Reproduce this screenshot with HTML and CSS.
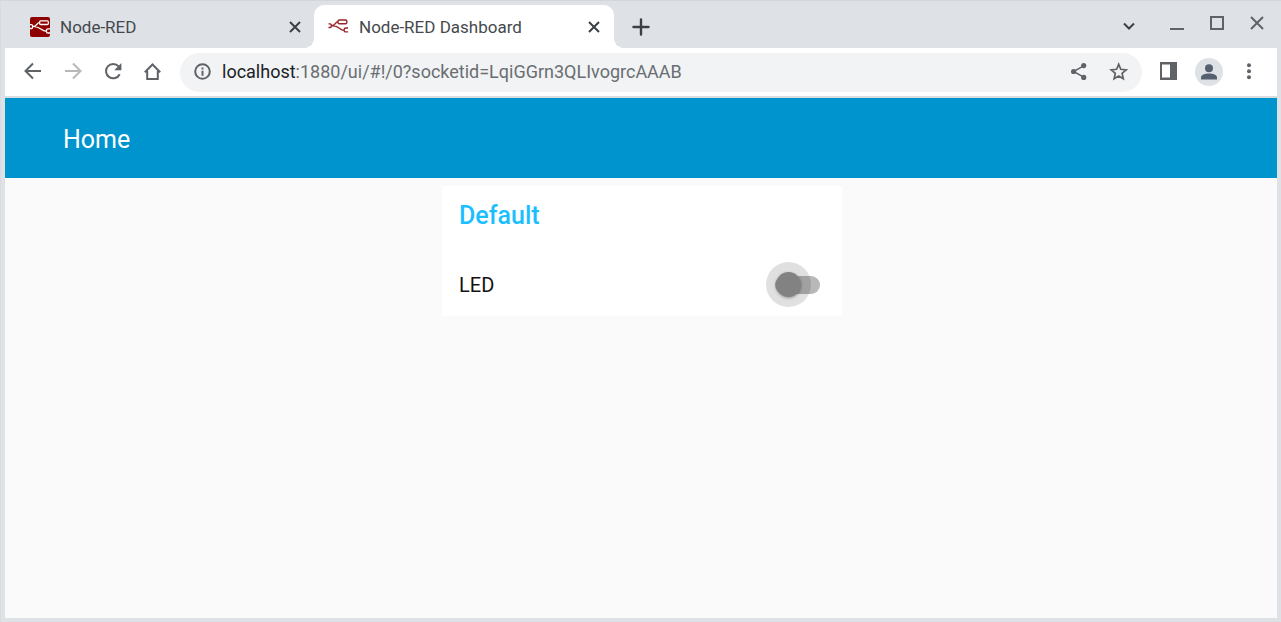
FILE: index.html
```html
<!DOCTYPE html>
<html lang="en">
<head>
<meta charset="utf-8">
<title>Node-RED Dashboard</title>
<link rel="stylesheet" href="styles.css">
</head>
<body>
<div class="browser">
  <div class="tabstrip">
    <div class="tab">
      <svg class="favicon" viewBox="0 0 20 20"><rect width="20" height="20" rx="2" fill="#8f0000"/><g fill="none" stroke="#fff" stroke-width="1.3"><rect x="9.600" y="3.800" width="8.800" height="3.700" rx="1.200"/><path d="M0 7.700h1.400q1.200 0 1.200 1.200v1.400q0 1.200-1.200 1.200H0M2.600 9.600c5 0 3.500-4 7-4M4.500 9.600c6 0 6.500 4.700 12 4.700M20 11.800h-2q-1.500 0-1.500 1.200v1.700q0 1.300 1.500 1.300h2"/></g></svg>
      <span class="tab-title">Node-RED</span>
      <button class="icon-button small" aria-label="Close Node-RED"><svg viewBox="0 0 20 20"><path d="M5 5l10 10M15 5L5 15" class="dark-line"/></svg></button>
    </div>
    <div class="tab active">
      <svg class="favicon" viewBox="0 0 20 20" fill="none" stroke="#9b2226" stroke-width="1.4"><rect x="9" y="3" width="8.800" height="3.700" rx="1.200"/><path d="M-.5 6.900h1.600q1.200 0 1.200 1v1.600q0 1-1.200 1H-.5M2.300 8.700c5 0 3.500-4 6.700-4M4 8.700c6 0 6.500 4.700 11 4.700M19 11h-2q-1.800 0-1.800 1.200v1.700q0 1 1.800 1h2"/></svg>
      <span class="tab-title">Node-RED Dashboard</span>
      <button class="icon-button small" aria-label="Close Node-RED Dashboard"><svg viewBox="0 0 20 20"><path d="M5 5l10 10M15 5L5 15" class="dark-line"/></svg></button>
    </div>
    <button class="icon-button new-tab" aria-label="New tab"><svg viewBox="0 0 20 20"><path d="M10 2.500v15M2.500 10h15" class="dark-line bold"/></svg></button>
    <div class="window-controls">
      <button class="icon-button chevron" aria-label="Search tabs"><svg viewBox="0 0 20 20"><path d="M5 7.500l5 5 5-5" class="dark-line"/></svg></button>
      <button class="icon-button" aria-label="Minimize"><svg viewBox="0 0 20 20"><path d="M3 16h14" class="line"/></svg></button>
      <button class="icon-button" aria-label="Maximize"><svg viewBox="0 0 20 20"><rect x="4" y="4" width="12" height="12" class="line"/></svg></button>
      <button class="icon-button" aria-label="Close window"><svg viewBox="0 0 20 20"><path d="M4 4l12 12M16 4L4 16" class="line"/></svg></button>
    </div>
  </div>
  <div class="toolbar">
    <nav class="nav-buttons">
      <button class="icon-button" aria-label="Back"><svg viewBox="0 0 20 20"><path d="M18 9H3M10 1.500L2.500 9l7.500 7.500" class="line"/></svg></button>
      <button class="icon-button faded" aria-label="Forward"><svg viewBox="0 0 20 20"><path d="M2 9h15M10 1.500L17.500 9 10 16.500" class="line"/></svg></button>
      <button class="icon-button" aria-label="Reload"><svg viewBox="0 0 20 20"><path d="M16.700 12.200A7.200 7.200 0 1 1 15.600 4.300" class="line"/><path d="M18.400 1v7.200h-7.200z" fill="#5f6368"/></svg></button>
      <button class="icon-button" aria-label="Home"><svg viewBox="0 0 20 20"><path d="M1.800 10.200L9.500 2.500l7.700 7.700M4.200 9V17h10.600V9" class="line"/></svg></button>
    </nav>
    <div class="address">
      <svg class="glyph" viewBox="0 0 20 20"><circle cx="10.500" cy="9.500" r="7.300" class="line"/><path d="M10.500 8.800v5M10.500 5.500v2" class="line"/></svg>
      <div class="url"><span class="host">localhost</span>:1880/ui/#!/0?socketid=LqiGGrn3QLIvogrcAAAB</div>
      <button class="icon-button" aria-label="Share"><svg viewBox="0 0 20 20"><path d="M14.700 3.900L4.500 9.500l10.200 5.600" fill="none" stroke="#5f6368" stroke-width="1.500"/><g fill="#5f6368"><circle cx="14.700" cy="3.600" r="2.600"/><circle cx="4.600" cy="9.500" r="2.600"/><circle cx="14.700" cy="15.400" r="2.600"/></g></svg></button>
      <button class="icon-button" aria-label="Bookmark"><svg viewBox="0 0 20 20"><path d="M9.700 2.300l2.100 5 5.400.500-4.100 3.600 1.200 5.300-4.600-2.800-4.600 2.800 1.200-5.300L2.200 7.800l5.400-.500z" fill="none" stroke="#5f6368" stroke-width="1.700"/></svg></button>
    </div>
    <div class="tools">
      <button class="icon-button" aria-label="Side panel"><svg viewBox="0 0 20 20"><path fill-rule="evenodd" d="M1 0h17v18H1zM3 2.500v13h8v-13z" fill="#5f6368"/></svg></button>
      <button class="icon-button avatar" aria-label="Profile"><svg viewBox="0 0 20 20" fill="#55606f"><circle cx="10" cy="6.200" r="4"/><path d="M2 17.500v-2c0-2.700 4-4 8-4s8 1.300 8 4v2z"/></svg></button>
      <button class="icon-button" aria-label="Menu"><svg viewBox="0 0 20 20" fill="#5f6368"><circle cx="10" cy="3.200" r="2"/><circle cx="10" cy="9.200" r="2"/><circle cx="10" cy="15.200" r="2"/></svg></button>
    </div>
  </div>
  <header class="app-header"><h1>Home</h1></header>
  <main class="dashboard">
    <section class="card">
      <h2>Default</h2>
      <div class="control">
        <label for="led">LED</label>
        <input class="switch" id="led" type="checkbox" role="switch">
      </div>
    </section>
  </main>
</div>
</body>
</html>
```
FILE: styles.css
```css
* { box-sizing: border-box; }

body {
  margin: 0;
  font-family: Roboto, "Liberation Sans", sans-serif;
  color: #111;
}

.browser {
  display: flex;
  flex-direction: column;
  min-height: 100vh;
  padding: 0 4px 4px 5px;
  background: #dee1e6;
  box-shadow: inset 0 1px #d3d7db, inset 1px 0 #d8dbdf;
}

.icon-button {
  display: flex;
  flex: none;
  align-items: center;
  justify-content: center;
  width: 20px;
  height: 20px;
  padding: 0;
  border: 0;
  background: none;
}

.icon-button svg, .glyph, .favicon {
  flex: none;
  width: 20px;
  height: 20px;
  overflow: visible;
}

.line { fill: none; stroke: #5f6368; stroke-width: 2; }
.dark-line { fill: none; stroke: #3c4043; stroke-width: 2; }
.bold { stroke-width: 2.4; stroke-linecap: round; }
.faded { opacity: .45; }

.tabstrip {
  display: flex;
  align-items: flex-end;
  height: 48px;
}

.tab {
  display: flex;
  align-items: center;
  gap: 10px;
  width: 300px;
  height: 43px;
  padding: 0 10px 0 15px;
  font-size: 17px;
  color: #45494d;
}

.tab:first-child { width: 309px; padding: 0 9px 0 25px; }

.tab-title { flex: 1; white-space: nowrap; }

.active {
  position: relative;
  background: #fff;
  border-radius: 10px 10px 0 0;
}

.active::before, .active::after {
  content: "";
  position: absolute;
  bottom: 0;
  width: 10px;
  height: 10px;
}

.active::before {
  right: 100%;
  background: radial-gradient(circle at 0 0, transparent 10px, #fff 10px);
}

.active::after {
  left: 100%;
  background: radial-gradient(circle at 100% 0, transparent 10px, #fff 10px);
}

.new-tab { align-self: center; margin: 5px 0 0 17px; }

.window-controls {
  display: flex;
  gap: 20px;
  align-self: center;
  margin: 0 10px 0 auto;
}

.chevron { margin: 3px 8px 0 0; }

.toolbar {
  display: flex;
  align-items: center;
  gap: 17px;
  height: 50px;
  padding: 0 18px;
  background: #fff;
  border-bottom: 2px solid #dadde0;
}

.nav-buttons { display: flex; gap: 20px; }

.address {
  display: flex;
  flex: 1;
  align-items: center;
  gap: 20px;
  height: 39px;
  padding: 0 13px 0 12px;
  border-radius: 20px;
  background: #f1f3f4;
}

.url {
  flex: 1;
  margin-left: -10px;
  font-size: 18px;
  line-height: 24px;
  color: #6a6e72;
}

.host { color: #202124; }

.tools { display: flex; align-items: center; gap: 16px; }
.tools .avatar { width: 28px; height: 28px; border-radius: 50%; background: #dee1e6; }

.app-header {
  display: flex;
  align-items: center;
  height: 80px;
  padding: 3px 58px 0;
  background: #0094ce;
  color: #fff;
}

.app-header h1 {
  margin: 0;
  font-size: 25px;
  font-weight: 400;
}

.dashboard {
  flex: 1;
  padding: 8px 8px 8px 10px;
  background: #fafafa;
}

.card {
  max-width: 400px;
  margin: 0 auto;
  padding: 15px 17px 9px;
  background: #fff;
}

.card h2 {
  margin: 0;
  font-size: 25px;
  font-weight: 500;
  line-height: 30px;
  color: #1bbfff;
}

.control {
  display: flex;
  align-items: center;
  justify-content: space-between;
  height: 45px;
  margin-top: 31px;
  padding-right: 5px;
  font-size: 20px;
}

.switch {
  appearance: none;
  position: relative;
  width: 45px;
  height: 18px;
  margin: 0;
  border-radius: 9px;
  background: #b8b8b8;
}

.switch::before, .switch::after {
  content: "";
  position: absolute;
  border-radius: 50%;
}

.switch::before {
  top: -14px;
  left: -9px;
  width: 45px;
  height: 45px;
  background: rgba(0, 0, 0, .12);
}

.switch::after {
  top: -4px;
  left: 1px;
  width: 25px;
  height: 25px;
  background: #828282;
  box-shadow: 0 1px 3px rgba(0, 0, 0, .35);
}
```
